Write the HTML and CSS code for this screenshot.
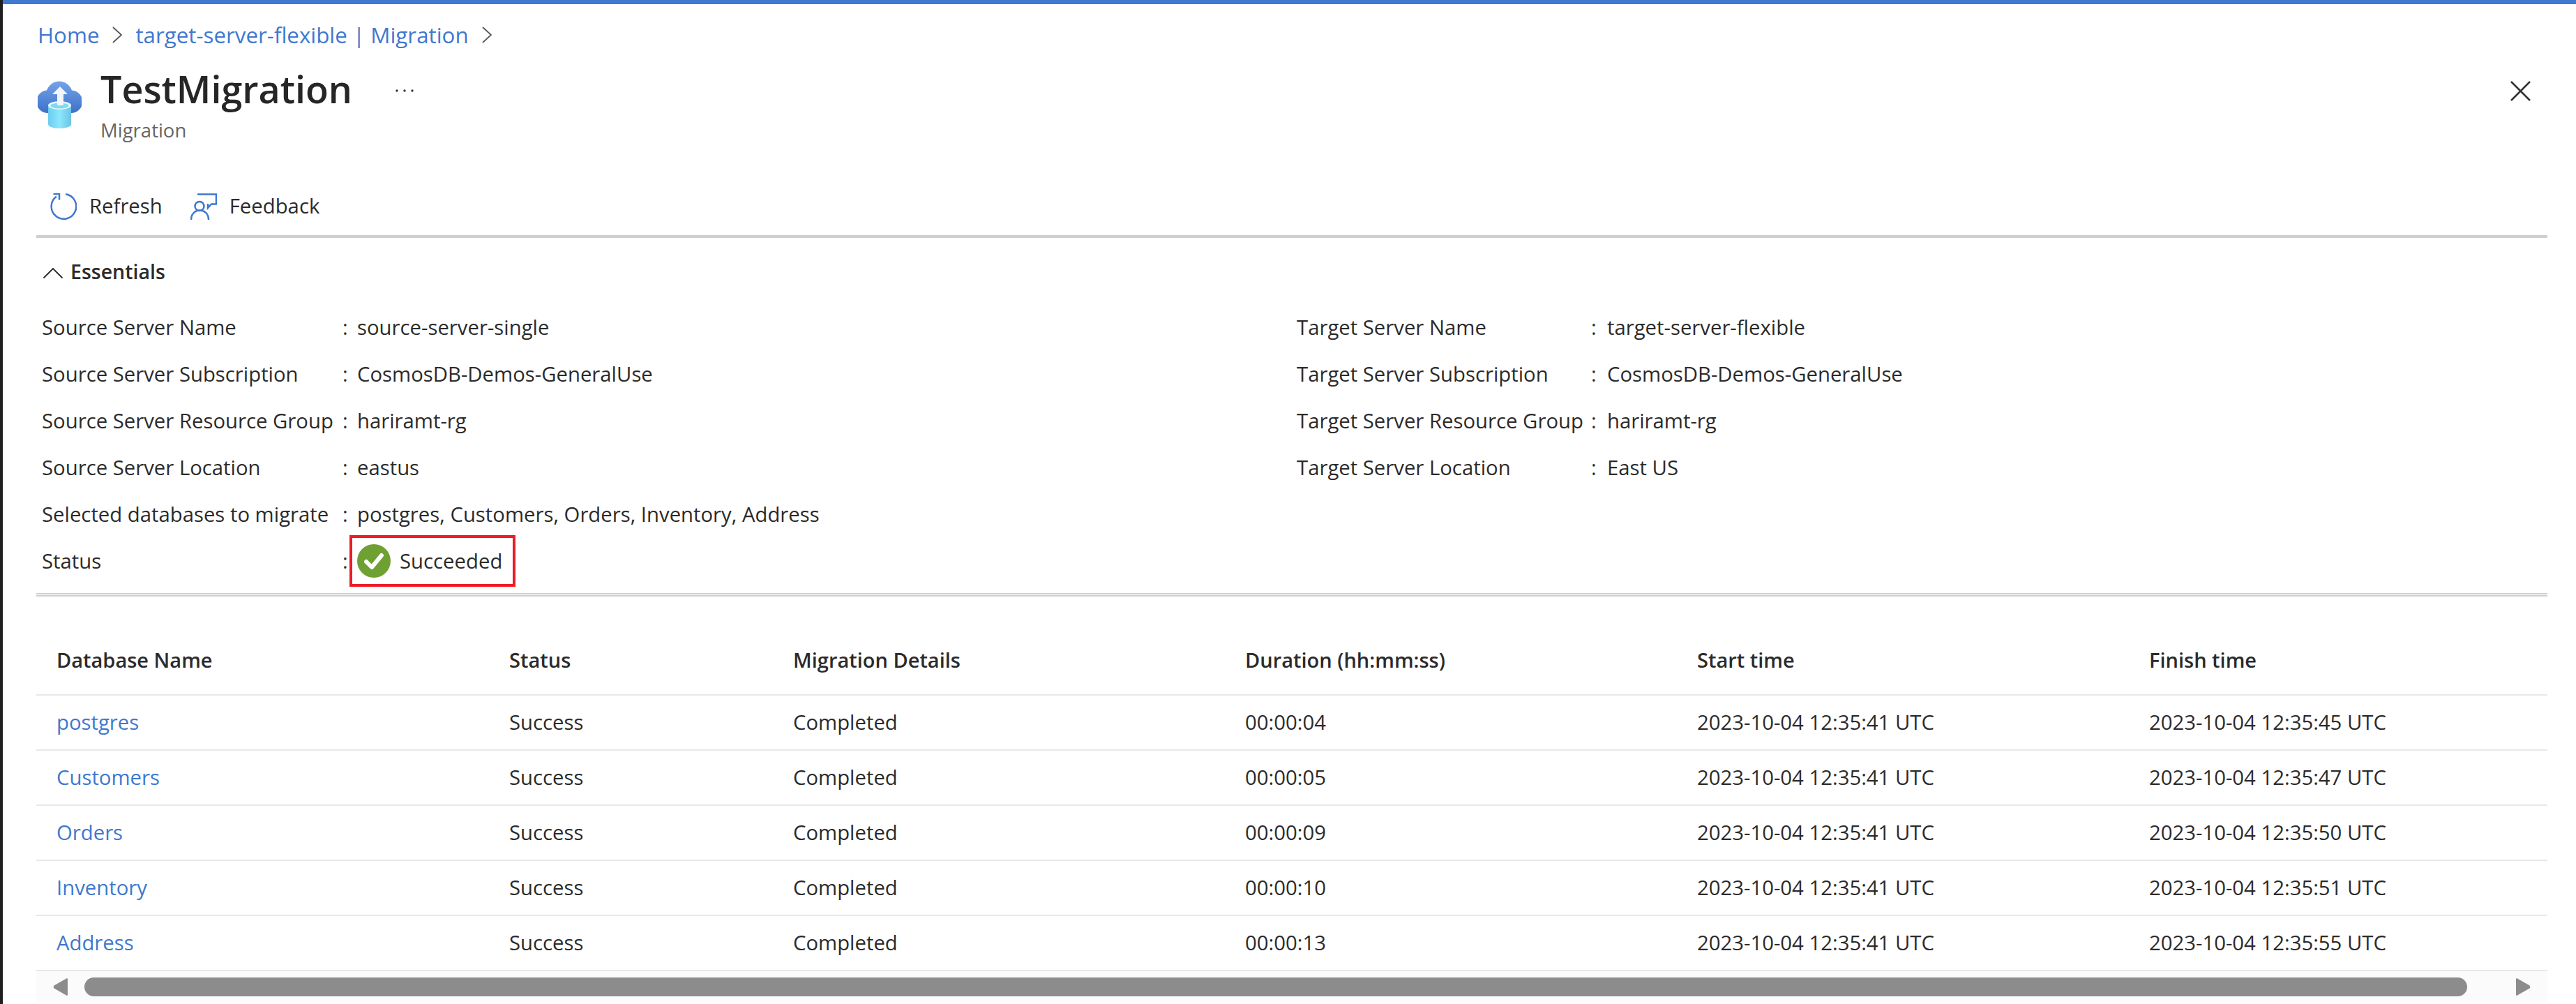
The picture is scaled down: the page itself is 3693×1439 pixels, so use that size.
FILE: index.html
```html
<!DOCTYPE html>
<html lang="en">
<head>
    <meta charset="UTF-8">
    <title>TestMigration - Migration</title>
    <link rel="stylesheet" href="styles.css">
</head>
<body>
<div class="page">

    <nav class="breadcrumb">
        <a class="crumb crumb-home">Home</a>
        <svg class="crumb-sep" viewBox="0 0 14 24"><path d="M1 1l12 11L1 23"/></svg>
        <a class="crumb crumb-parent">target-server-flexible | Migration</a>
        <svg class="crumb-sep" viewBox="0 0 14 24"><path d="M1 1l12 11L1 23"/></svg>
    </nav>

    <header class="title-row">
        <svg class="resource-icon" viewBox="0 0 63 68">
            <defs>
                <linearGradient id="cloudFill" x1="0" y1="0" x2="0" y2="1">
                    <stop offset="0" stop-color="#74a3ea"/>
                    <stop offset="1" stop-color="#3c71c8"/>
                </linearGradient>
                <linearGradient id="canFill" x1="0" y1="0" x2="1" y2="0">
                    <stop offset="0" stop-color="#6ccdee"/>
                    <stop offset="0.5" stop-color="#8ce6fc"/>
                    <stop offset="1" stop-color="#6cc4e4"/>
                </linearGradient>
            </defs>
            <path fill="url(#cloudFill)" d="M16 46A15.5 15.5 0 0 1 13 13.500A19 19 0 0 1 49 13.500A15.500 15.500 0 0 1 47 46Z"/>
            <path fill="url(#canFill)" d="M15 35V62C15 66 24 68 31.500 68S48 66 48 62V35Z"/>
            <ellipse cx="31.500" cy="35" rx="16.500" ry="6" fill="#e6f8fd"/>
            <ellipse cx="31.500" cy="35.500" rx="13" ry="4" fill="#7ed9f2"/>
            <path fill="#f2f6fb" d="M32 8L43 19H37V34.500Q32 36 28 34.500V19H21Z"/>
        </svg>
        <div class="title-text">
            <h1>TestMigration</h1>
            <p class="subtitle">Migration</p>
        </div>
        <svg class="more-icon" viewBox="0 0 26 4"><circle cx="2" cy="2" r="1.700"/><circle cx="13" cy="2" r="1.700"/><circle cx="24" cy="2" r="1.700"/></svg>
        <svg class="close-icon" viewBox="0 0 29 29"><path d="M1 1l27 27M28 1L1 28"/></svg>
    </header>

    <div class="toolbar">
        <button class="tool-btn">
            <svg class="tool-icon" viewBox="0 0 38 38"><path d="M22 1.300A17.800 17.800 0 1 1 9 4.500M4.500 1H13V9.500"/></svg>
            <span class="tool-label">Refresh</span>
        </button>
        <button class="tool-btn">
            <svg class="tool-icon" viewBox="0 0 38 38"><path d="M10 1.500H37V15.500H30L25 21V15"/><circle cx="13" cy="18.500" r="6.500"/><path d="M1 38C1 20 26 20 26 38"/></svg>
            <span class="tool-label">Feedback</span>
        </button>
    </div>
    <div class="rule"></div>

    <div class="essentials-head">
        <svg class="collapse-icon" viewBox="0 0 28 15"><path d="M0.500 14.500L14 1l13.500 13.500"/></svg>
        <span>Essentials</span>
    </div>

    <div class="essentials">
        <div class="kv-list kv-left">
            <span>Source Server Name</span><span>:</span><span>source-server-single</span>
            <span>Source Server Subscription</span><span>:</span><span>CosmosDB-Demos-GeneralUse</span>
            <span>Source Server Resource Group</span><span>:</span><span>hariramt-rg</span>
            <span>Source Server Location</span><span>:</span><span>eastus</span>
            <span>Selected databases to migrate</span><span>:</span><span>postgres, Customers, Orders, Inventory, Address</span>
            <span>Status</span><span>:</span>
            <span class="status-box">
                <svg class="check-icon" viewBox="0 0 48 48"><circle cx="24" cy="24" r="24"/><path d="M13 25l8 8 14-17"/></svg>
                Succeeded
            </span>
        </div>
        <div class="kv-list kv-right">
            <span>Target Server Name</span><span>:</span><span>target-server-flexible</span>
            <span>Target Server Subscription</span><span>:</span><span>CosmosDB-Demos-GeneralUse</span>
            <span>Target Server Resource Group</span><span>:</span><span>hariramt-rg</span>
            <span>Target Server Location</span><span>:</span><span>East US</span>
        </div>
    </div>
    <div class="rule-double"></div>

    <table class="db-table">
        <colgroup>
            <col class="col-name"><col class="col-status"><col class="col-wide"><col class="col-wide"><col class="col-wide"><col>
        </colgroup>
        <thead>
            <tr><th>Database Name</th><th>Status</th><th>Migration Details</th><th>Duration (hh:mm:ss)</th><th>Start time</th><th>Finish time</th></tr>
        </thead>
        <tbody>
            <tr><td><a>postgres</a></td><td>Success</td><td>Completed</td><td>00:00:04</td><td>2023-10-04 12:35:41 UTC</td><td>2023-10-04 12:35:45 UTC</td></tr>
            <tr><td><a>Customers</a></td><td>Success</td><td>Completed</td><td>00:00:05</td><td>2023-10-04 12:35:41 UTC</td><td>2023-10-04 12:35:47 UTC</td></tr>
            <tr><td><a>Orders</a></td><td>Success</td><td>Completed</td><td>00:00:09</td><td>2023-10-04 12:35:41 UTC</td><td>2023-10-04 12:35:50 UTC</td></tr>
            <tr><td><a>Inventory</a></td><td>Success</td><td>Completed</td><td>00:00:10</td><td>2023-10-04 12:35:41 UTC</td><td>2023-10-04 12:35:51 UTC</td></tr>
            <tr><td><a>Address</a></td><td>Success</td><td>Completed</td><td>00:00:13</td><td>2023-10-04 12:35:41 UTC</td><td>2023-10-04 12:35:55 UTC</td></tr>
        </tbody>
    </table>

    <div class="hscroll">
        <svg class="hscroll-arrow" viewBox="0 0 21 27"><path d="M19 1.500Q21 0 21 3V24Q21 27 19 25.500L1.500 15.500Q0 13.500 1.500 11.500Z"/></svg>
        <div class="hscroll-thumb"></div>
        <svg class="hscroll-arrow" viewBox="0 0 21 27"><path d="M2 1.500Q0 0 0 3V24Q0 27 2 25.500L19.500 15.500Q21 13.500 19.500 11.500Z"/></svg>
    </div>

</div>
</body>
</html>
```

FILE: styles.css
```css
* {
    box-sizing: border-box;
}

html, body {
    margin: 0;
    padding: 0;
    background: #fff;
}

body {
    font-family: "Open Sans", "Noto Sans", sans-serif;
    font-size: 29.3px;
    color: #2b2b2b;
    overflow: hidden;
}

.page {
    width: 3693px;
    height: 1439px;
    padding: 0 41px 0 48px;
    border-left: 4px solid #1f1f1f;
    overflow: hidden;
    position: relative;
    background: linear-gradient(#3f78cf, #3f78cf) no-repeat top left / 100% 6px;
}

/* Breadcrumb */
.breadcrumb {
    display: flex;
    align-items: center;
    height: 32px;
    margin-top: 34px;
    padding-left: 2px;
    font-size: 31.3px;
}

.crumb {
    color: #3f78cf;
    white-space: nowrap;
}

.crumb-sep {
    width: 14px;
    height: 24px;
    margin: 0 19px;
    fill: none;
    stroke: #555;
    stroke-width: 1.800;
}

/* Title */
.title-row {
    display: flex;
    align-items: flex-start;
    margin-top: 34px;
}

.resource-icon {
    width: 63px;
    height: 68px;
    margin: 16px 27px 0 2px;
    flex: none;
}

h1 {
    margin: -2px 0 0;
    font-size: 53.8px;
    line-height: 58px;
    font-weight: 600;
    color: #262626;
}

.subtitle {
    margin: 16px 0 0;
    font-size: 27.5px;
    line-height: 30px;
    color: #666;
}

.more-icon {
    width: 26px;
    height: 4px;
    margin: 28px 0 0 62px;
    fill: #333;
}

.close-icon {
    width: 29px;
    height: 29px;
    margin: 16px 24px 0 auto;
    fill: none;
    stroke: #333;
    stroke-width: 2.500;
}

/* Toolbar */
.toolbar {
    display: flex;
    gap: 40px;
    height: 40px;
    margin-top: 74px;
    padding-left: 20px;
}

.tool-btn {
    display: flex;
    align-items: center;
    gap: 18px;
    padding: 0;
    border: 0;
    background: none;
    font: inherit;
    color: #2b2b2b;
}

.tool-label {
    padding-bottom: 2px;
}

.tool-icon {
    width: 38px;
    height: 38px;
    fill: none;
    stroke: #3f78cf;
    stroke-width: 2.500;
}

.rule {
    height: 4px;
    margin-top: 21px;
    background: #cfcfcf;
}

/* Essentials */
.essentials-head {
    display: flex;
    align-items: center;
    gap: 11px;
    height: 40px;
    margin-top: 28px;
    padding-left: 10px;
    font-size: 28.5px;
    font-weight: 600;
}

.collapse-icon {
    width: 28px;
    height: 15px;
    margin-top: 4px;
    fill: none;
    stroke: #333;
    stroke-width: 2;
}

.essentials {
    display: flex;
    margin-top: 26px;
    padding-left: 8px;
    height: 402px;
}

.kv-list {
    display: grid;
    grid-auto-rows: 67px;
    align-items: center;
    white-space: nowrap;
}

.kv-left {
    grid-template-columns: 431px 21px 1347px;
}

.kv-right {
    grid-template-columns: 422px 23px 1px;
    align-content: start;
}

.status-box {
    display: inline-flex;
    align-items: center;
    gap: 13px;
    width: 238px;
    height: 74px;
    margin-left: -11px;
    padding-left: 7px;
    border: 4px solid #ed1c24;
}

.check-icon {
    width: 48px;
    height: 48px;
}

.check-icon circle {
    fill: #6fa032;
}

.check-icon path {
    fill: none;
    stroke: #fff;
    stroke-width: 6;
    stroke-linecap: round;
    stroke-linejoin: round;
}

.rule-double {
    height: 5px;
    margin-top: 13px;
    border-top: 2px solid #cfcfcf;
    border-bottom: 2px solid #cfcfcf;
}

/* Table */
.db-table {
    width: 3600px;
    margin-top: 42px;
    border-collapse: separate;
    border-spacing: 0;
    table-layout: fixed;
}

.col-name { width: 649px; }
.col-status { width: 407px; }
.col-wide { width: 648px; }

.db-table th,
.db-table td {
    padding: 0 0 2px 29px;
    text-align: left;
    white-space: nowrap;
    border-bottom: 2px solid #e8e8e8;
}

.db-table th {
    height: 100px;
    font-size: 29px;
    font-weight: 600;
}

.db-table td {
    height: 79px;
}

.db-table a {
    color: #3f78cf;
}

/* Horizontal scrollbar */
.hscroll {
    display: flex;
    align-items: center;
    height: 45px;
    padding: 0 24px;
    background: #fbfbfb;
}

.hscroll-arrow {
    flex: none;
    width: 21px;
    height: 27px;
    fill: #8c8c8c;
}

.hscroll-thumb {
    flex: none;
    width: 3416px;
    height: 27px;
    margin: 0 70px 0 24px;
    border-radius: 14px;
    background: #8c8c8c;
}
```
